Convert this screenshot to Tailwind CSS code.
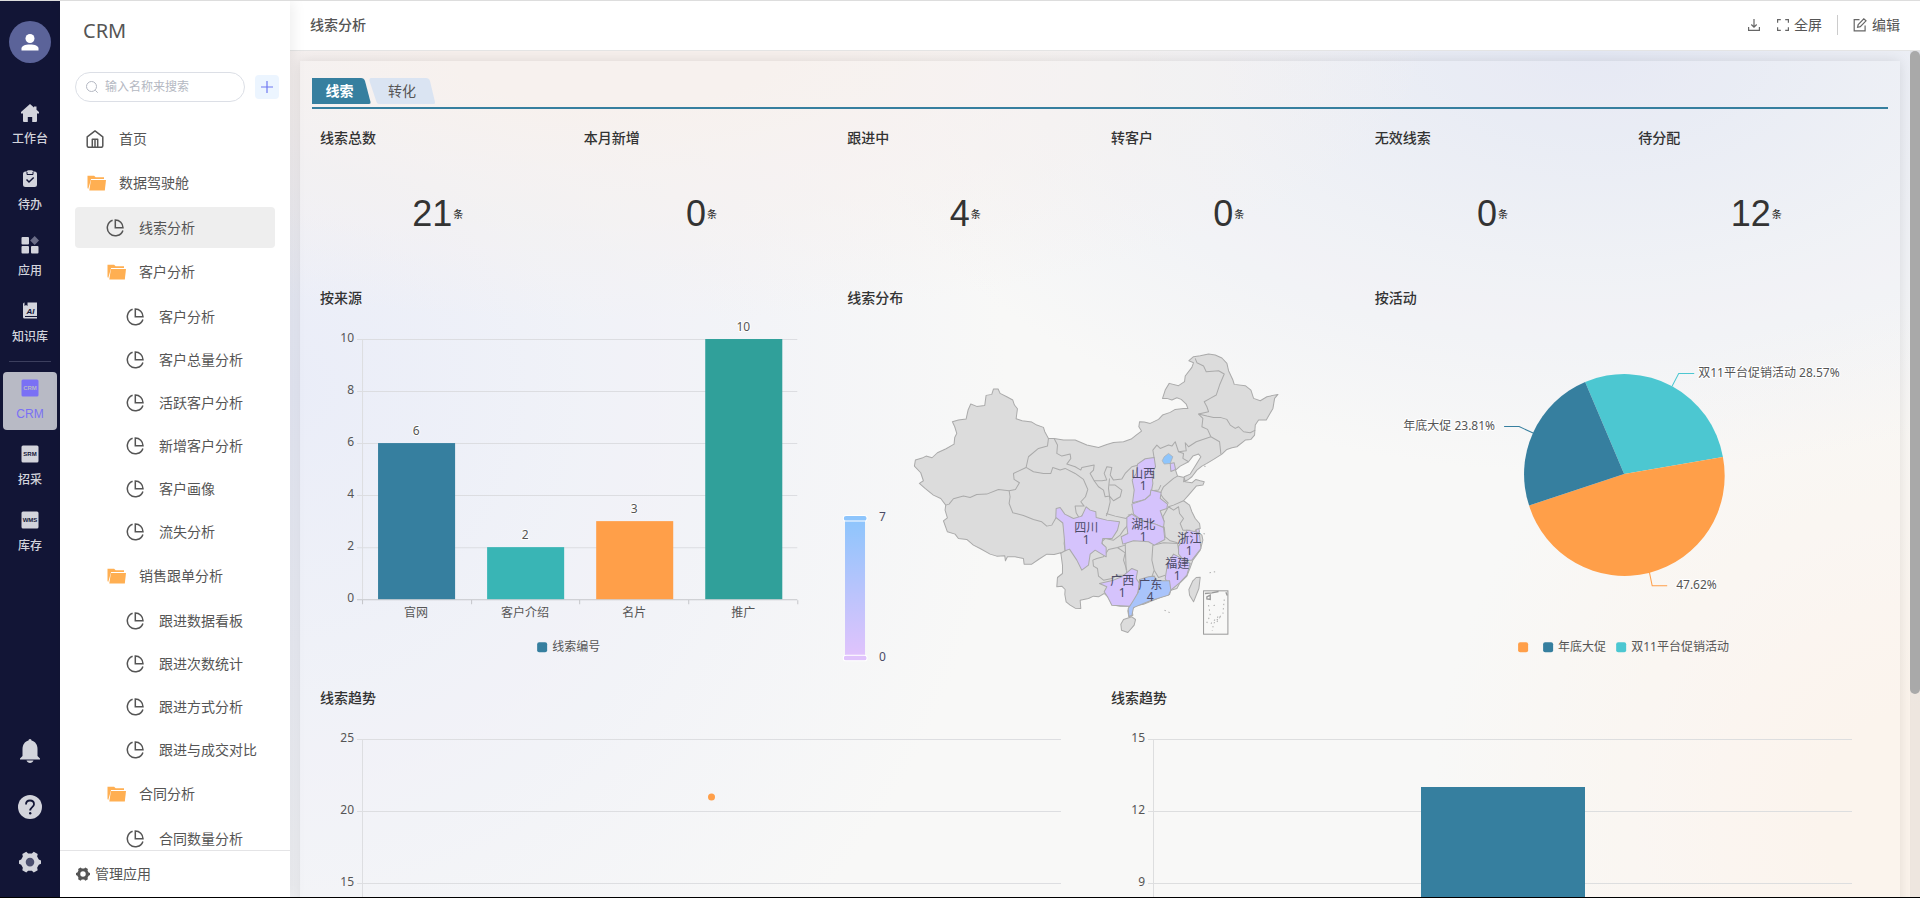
<!DOCTYPE html>
<html lang="zh-CN">
<head>
    <meta charset="UTF-8">
    <meta name="viewport" content="width=device-width, initial-scale=1.0">
    <title>CRM - 线索分析</title>
    <script src="https://cdn.jsdelivr.net/npm/@tailwindcss/browser@4"></script>
</head>
<body class="font-['Noto_Sans','Noto_Sans_CJK_SC',sans-serif] text-sm text-[#555]">
    <!-- icon set -->
    <svg class="hidden">
        <symbol id="i-pie" viewBox="0 0 18 18" fill="none" stroke="#555" stroke-width="1.5">
            <path d="M6.6 1.3A8 8 0 1 0 16.9 11.4"/>
            <path d="M9.3 1v7.7H17A7.7 7.7 0 0 0 9.3 1z"/>
        </symbol>
        <symbol id="i-folder" viewBox="0 0 20 18">
            <path fill="#ffaf52" d="M1.5 1.7h6.6l1.6 1.6h8.3v1.8H5.1L3 12.5 2.2 15 1.5 14z"/>
            <path fill="#ffaf52" d="M4.9 6h15.1l-1.2 10.6H3.3z"/>
        </symbol>
        <symbol id="i-house" viewBox="0 0 18 18" fill="none" stroke="#555" stroke-width="1.5" stroke-linejoin="round">
            <path d="M1.2 6.8 9 .9l7.8 5.9v9a1.5 1.5 0 0 1-1.5 1.5H2.7a1.5 1.5 0 0 1-1.5-1.5z"/>
            <path d="M6.3 17V9.3h5.4V17M9 9.5V17"/>
        </symbol>
        <symbol id="i-gear" viewBox="0 0 20 20">
            <path fill="currentColor" fill-rule="evenodd" d="M6.6.6 8.3 2.2h3.4L13.4.6 17 2.7l-.5 2.3L18 7.7l2 .9v3l-2 1-1.5 2.6.5 2.3-3.6 2-1.7-1.5H8.3l-1.7 1.5-3.6-2 .5-2.3L2 12.600l-2-1v-3l2-.9L3.5 5 3 2.700zM10 6.200a3.900 3.900 0 1 0 0 7.800 3.900 3.900 0 0 0 0-7.800z"/>
        </symbol>
    </svg>

    <div class="flex h-screen overflow-hidden border-t border-b border-t-[#ddd] border-b-black">
        <!-- app rail -->
        <nav class="w-15 shrink-0 bg-[#121536] flex flex-col items-center text-xs font-medium text-[#d3d4dc]">
            <button class="mt-5 size-[42px] rounded-full bg-[#5b6399] flex items-center justify-center" aria-label="用户">
                <svg class="size-5" viewBox="0 0 20 20" fill="#fff"><circle cx="10" cy="6.5" r="4.5"/><path d="M1.5 18.500v-2c0-2.500 3.500-4 8.500-4s8.500 1.500 8.500 4v2z"/></svg>
            </button>
            <div class="mt-[33px] flex flex-col items-center gap-2">
                <a href="#" class="w-[54px] h-[58px] pt-2 flex flex-col items-center gap-[9px] leading-4">
                    <svg class="size-[18px]" viewBox="0 0 18 18" fill="currentColor"><path d="M9 0 0 8v1.5h2V17a1 1 0 0 0 1 1h3.800v-5h4.400v5H15a1 1 0 0 0 1-1V9.500h2V8L15.500 5.700V2.500H13v1z"/></svg>
                    工作台
                </a>
                <a href="#" class="w-[54px] h-[58px] pt-2 flex flex-col items-center gap-[9px] leading-4">
                    <svg class="size-[18px]" viewBox="0 0 18 18"><path fill="currentColor" d="M4.500 1.500h1.300A2 2 0 0 1 7.500.3h3a2 2 0 0 1 1.700 1.200h1.300a2.500 2.500 0 0 1 2.500 2.500v10.500a2.500 2.500 0 0 1-2.500 2.500h-9A2.500 2.500 0 0 1 2 14.500V4a2.500 2.500 0 0 1 2.500-2.500z"/><path fill="none" stroke="#121536" d="M6 2v2.500h6V2"/><path fill="none" stroke="#121536" stroke-width="1.5" d="m5.500 9.500 2.500 2.500L12.700 7.500"/></svg>
                    待办
                </a>
                <a href="#" class="w-[54px] h-[58px] pt-2 flex flex-col items-center gap-[9px] leading-4">
                    <svg class="size-[18px]" viewBox="0 0 18 18" fill="currentColor"><rect x=".5" y="1" width="7.5" height="7.5" rx="1"/><rect x=".5" y="10" width="7.5" height="7.5" rx="1"/><rect x="10" y="10" width="7.5" height="7.5" rx="1"/><path fill="#6b6d87" d="m13.700 0 4.300 4.500-4.300 4.500-4.500-4.500z"/></svg>
                    应用
                </a>
                <a href="#" class="w-[54px] h-[58px] pt-2 flex flex-col items-center gap-[9px] leading-4">
                    <svg class="size-[18px]" viewBox="0 0 18 18"><path fill="currentColor" d="M2 2a1.500 1.500 0 0 1 1.500-1.500H16V14H4v1h12v1.500H3.500A1.500 1.500 0 0 1 2 15z"/><path fill="#121536" d="M3.500 0h3v4L5 3 3.500 4z"/><text x="5.500" y="12" font-size="8" font-weight="700" font-style="italic" font-family="Liberation Sans" fill="#121536">AI</text></svg>
                    知识库
                </a>
            </div>
            <hr class="mt-[9px] mb-2.5 w-[42px] border-[#3c3f5e]">
            <div class="flex flex-col items-center gap-2">
                <a href="#" class="w-[54px] h-[58px] pt-[7px] rounded bg-[#b8bac5] text-[#7a70f5] flex flex-col items-center gap-[9px] leading-4 font-normal font-['Liberation_Sans']">
                    <svg class="size-[18px]" viewBox="0 0 18 18"><rect x=".5" y=".5" width="17" height="17" rx="1.5" fill="#7a70f5"/><text x="9" y="11" text-anchor="middle" font-size="6" font-weight="700" font-family="Liberation Sans" fill="#b8bac5">CRM</text></svg>
                    CRM
                </a>
                <a href="#" class="w-[54px] h-[58px] pt-[7px] flex flex-col items-center gap-[9px] leading-4">
                    <svg class="size-[18px]" viewBox="0 0 18 18"><rect x=".5" y=".5" width="17" height="17" rx="1.5" fill="currentColor"/><text x="9" y="11" text-anchor="middle" font-size="6" font-weight="700" font-family="Liberation Sans" fill="#121536">SRM</text></svg>
                    招采
                </a>
                <a href="#" class="w-[54px] h-[58px] pt-[7px] flex flex-col items-center gap-[9px] leading-4">
                    <svg class="size-[18px]" viewBox="0 0 18 18"><rect x=".5" y=".5" width="17" height="17" rx="1.5" fill="currentColor"/><text x="9" y="11" text-anchor="middle" font-size="6" font-weight="700" font-family="Liberation Sans" fill="#121536">WMS</text></svg>
                    库存
                </a>
            </div>
            <div class="mt-auto mb-6 flex flex-col items-center gap-8">
                <button aria-label="通知"><svg class="block size-6" viewBox="0 0 24 24" fill="currentColor"><path d="M12 0c1 0 1.500.8 1.500 1.500C17.500 2.500 19.500 6 19.500 10v7l2.500 2.500v1H2v-1L4.500 17v-7c0-4 2-7.500 6-8.500C10.500.8 11 0 12 0zM8.500 21.500h7c-.5 1.500-2 2.500-3.500 2.500s-3-1-3.500-2.500z"/></svg></button>
                <button aria-label="帮助"><svg class="block size-6" viewBox="0 0 24 24"><circle cx="12" cy="12" r="12" fill="currentColor"/><path fill="none" stroke="#121536" stroke-width="1.8" d="M8 9.500C8 7 9.700 5.500 12 5.500s4 1.500 4 3.700c0 2.800-3.800 3-3.800 6.300"/><circle cx="12.200" cy="18.300" r="1.200" fill="#121536"/></svg></button>
                <button aria-label="设置"><svg class="block size-[22px]"><circle cx="11" cy="11" r="6" fill="#4b4e6e"/><use href="#i-gear"/></svg></button>
            </div>
        </nav>

        <!-- menu of the current app -->
        <aside class="relative z-10 w-[230px] shrink-0 bg-white flex flex-col shadow-[2px_0_14px_rgba(0,0,0,0.08)]">
            <h1 class="mt-4 ml-[23px] text-xl leading-7">CRM</h1>
            <div class="mt-[27px] pl-[15px] flex items-center gap-2.5">
                <label class="w-[170px] h-[30px] pl-2.5 rounded-full border border-[#dcdfe6] flex items-center gap-[7px]">
                    <svg class="size-3 shrink-0" viewBox="0 0 12 12" fill="none" stroke="#b4b8c2"><circle cx="5.500" cy="5.500" r="5"/><path d="m9.300 9.300 2.400 2.400"/></svg>
                    <input type="text" aria-label="搜索" placeholder="输入名称来搜索" class="w-full text-xs outline-none placeholder:text-[#b4b8c2]">
                </label>
                <button class="size-6 rounded bg-[#ecf5ff] flex items-center justify-center" aria-label="新增">
                    <svg class="size-3" viewBox="0 0 12 12" stroke="#6e78f2" stroke-width="1.2"><path d="M6 0v12M0 6h12"/></svg>
                </button>
            </div>
            <div class="mt-[15px] flex-1 min-h-0 overflow-hidden px-[15px]">
                <a href="#" class="h-[43px] pl-[11px] flex items-center gap-[15px]"><svg class="size-[18px]"><use href="#i-house"/></svg>首页</a>
                <a href="#" class="h-[46px] pl-[11px] flex items-center gap-[13px]"><svg class="w-5 h-[18px]"><use href="#i-folder"/></svg>数据驾驶舱</a>
                <a href="#" class="h-[41px] my-px pl-[31px] rounded bg-[#eee] flex items-center gap-[15px]"><svg class="size-[18px]"><use href="#i-pie"/></svg>线索分析</a>
                <a href="#" class="h-[46px] pl-[31px] flex items-center gap-[13px]"><svg class="w-5 h-[18px]"><use href="#i-folder"/></svg>客户分析</a>
                <a href="#" class="h-[43px] pl-[51px] flex items-center gap-[15px]"><svg class="size-[18px]"><use href="#i-pie"/></svg>客户分析</a>
                <a href="#" class="h-[43px] pl-[51px] flex items-center gap-[15px]"><svg class="size-[18px]"><use href="#i-pie"/></svg>客户总量分析</a>
                <a href="#" class="h-[43px] pl-[51px] flex items-center gap-[15px]"><svg class="size-[18px]"><use href="#i-pie"/></svg>活跃客户分析</a>
                <a href="#" class="h-[43px] pl-[51px] flex items-center gap-[15px]"><svg class="size-[18px]"><use href="#i-pie"/></svg>新增客户分析</a>
                <a href="#" class="h-[43px] pl-[51px] flex items-center gap-[15px]"><svg class="size-[18px]"><use href="#i-pie"/></svg>客户画像</a>
                <a href="#" class="h-[43px] pl-[51px] flex items-center gap-[15px]"><svg class="size-[18px]"><use href="#i-pie"/></svg>流失分析</a>
                <a href="#" class="h-[46px] pl-[31px] flex items-center gap-[13px]"><svg class="w-5 h-[18px]"><use href="#i-folder"/></svg>销售跟单分析</a>
                <a href="#" class="h-[43px] pl-[51px] flex items-center gap-[15px]"><svg class="size-[18px]"><use href="#i-pie"/></svg>跟进数据看板</a>
                <a href="#" class="h-[43px] pl-[51px] flex items-center gap-[15px]"><svg class="size-[18px]"><use href="#i-pie"/></svg>跟进次数统计</a>
                <a href="#" class="h-[43px] pl-[51px] flex items-center gap-[15px]"><svg class="size-[18px]"><use href="#i-pie"/></svg>跟进方式分析</a>
                <a href="#" class="h-[43px] pl-[51px] flex items-center gap-[15px]"><svg class="size-[18px]"><use href="#i-pie"/></svg>跟进与成交对比</a>
                <a href="#" class="h-[46px] pl-[31px] flex items-center gap-[13px]"><svg class="w-5 h-[18px]"><use href="#i-folder"/></svg>合同分析</a>
                <a href="#" class="h-[43px] pl-[51px] flex items-center gap-[15px]"><svg class="size-[18px]"><use href="#i-pie"/></svg>合同数量分析</a>
            </div>
            <button class="h-[47px] pl-4 border-t border-[#e4e4e6] flex items-center gap-[5px]"><svg class="size-3.5"><use href="#i-gear"/></svg>管理应用</button>
        </aside>

        <main class="flex-1 min-w-0 flex flex-col">
            <header class="h-[50px] shrink-0 px-5 pb-0.5 bg-white border-b border-[#e4e4e4] flex items-center">
                <h2 class="font-medium">线索分析</h2>
                <div class="ml-auto flex items-center">
                    <button class="mr-[17px]" aria-label="下载"><svg class="block size-3" viewBox="0 0 12 12" fill="none" stroke="#666" stroke-width="1.2"><path d="M.6 8v3.400h10.800V8M6 0v8M3.300 5.500 6 8.200l2.700-2.700"/></svg></button>
                    <button class="flex items-center gap-[5px]"><svg class="size-3" viewBox="0 0 12 12" fill="none" stroke="#666" stroke-width="1.2"><path d="M3.800.6H.6v3.200M8.200.6h3.200v3.200M3.800 11.400H.6V8.200M8.200 11.400h3.200V8.200"/></svg>全屏</button>
                    <span class="mx-[15px] w-px h-5 bg-[#ccc]"></span>
                    <button class="flex items-center gap-[5px]"><svg class="size-3.5" viewBox="0 0 14 14" fill="none" stroke="#666" stroke-width="1.2"><path d="M6.500 1.600H1.200v11.200h10.900V7.500M5.200 6.600l5.600-5.800 2.200 2-5.700 5.900-2.700.6z"/></svg>编辑</button>
                </div>
            </header>

            <div class="relative flex-1 min-h-0 overflow-hidden p-2.5 pr-5 bg-[#f7f7f6] bg-[radial-gradient(ellipse_50%_32%_at_20%_0%,#f6efec_20%,transparent),radial-gradient(ellipse_46%_50%_at_80%_0%,#e3e7f3,transparent),radial-gradient(ellipse_44%_90%_at_0%_40%,#e8ebf7,transparent),radial-gradient(ellipse_30%_60%_at_100%_90%,#fbf3eb_20%,transparent)]">
                <section class="px-3 pt-4 pb-10 bg-white/10 shadow-[0_0_12px_rgba(0,0,0,0.1)]">
                    <div class="h-8 border-b-2 border-[#367f9f] flex items-start" role="tablist">
                        <button role="tab" aria-selected="true" class="relative w-[59px] h-7 pr-1 font-bold text-white">
                            <svg class="absolute inset-0 w-[59px] h-7" viewBox="0 0 59 28"><path fill="#367f9f" d="M0 1h49q3 0 4 3l5.500 21q.5 2-1.500 2H0z"/></svg>
                            <span class="relative">线索</span>
                        </button>
                        <button role="tab" aria-selected="false" class="relative -ml-0.5 w-[66px] h-7">
                            <svg class="absolute inset-0 w-[66px] h-7" viewBox="0 0 66 28"><path fill="#dae4f2" d="M2 1h55q3 0 4 3l5 21q.5 2-1.500 2H10q-2 0-2.500-2L.5 4Q0 1 2 1z"/></svg>
                            <span class="relative">转化</span>
                        </button>
                    </div>

                    <div class="mt-[11px] grid grid-cols-6 gap-x-1.5 text-[#333]">
                        <div class="h-40"><h3 class="h-9 px-2 leading-9 font-medium">线索总数</h3><p class="h-[116px] pr-1.5 flex items-center justify-center gap-px text-4xl font-['Liberation_Sans']">21<span class="text-[10px] font-medium font-['Noto_Sans_CJK_SC']">条</span></p></div>
                        <div class="h-40"><h3 class="h-9 px-2 leading-9 font-medium">本月新增</h3><p class="h-[116px] pr-1.5 flex items-center justify-center gap-px text-4xl font-['Liberation_Sans']">0<span class="text-[10px] font-medium font-['Noto_Sans_CJK_SC']">条</span></p></div>
                        <div class="h-40"><h3 class="h-9 px-2 leading-9 font-medium">跟进中</h3><p class="h-[116px] pr-1.5 flex items-center justify-center gap-px text-4xl font-['Liberation_Sans']">4<span class="text-[10px] font-medium font-['Noto_Sans_CJK_SC']">条</span></p></div>
                        <div class="h-40"><h3 class="h-9 px-2 leading-9 font-medium">转客户</h3><p class="h-[116px] pr-1.5 flex items-center justify-center gap-px text-4xl font-['Liberation_Sans']">0<span class="text-[10px] font-medium font-['Noto_Sans_CJK_SC']">条</span></p></div>
                        <div class="h-40"><h3 class="h-9 px-2 leading-9 font-medium">无效线索</h3><p class="h-[116px] pr-1.5 flex items-center justify-center gap-px text-4xl font-['Liberation_Sans']">0<span class="text-[10px] font-medium font-['Noto_Sans_CJK_SC']">条</span></p></div>
                        <div class="h-40"><h3 class="h-9 px-2 leading-9 font-medium">待分配</h3><p class="h-[116px] pr-1.5 flex items-center justify-center gap-px text-4xl font-['Liberation_Sans']">12<span class="text-[10px] font-medium font-['Noto_Sans_CJK_SC']">条</span></p></div>
                    </div>

                    <div class="grid grid-cols-3 gap-x-1.5">
                        <!-- leads by source -->
                        <div>
                            <h3 class="h-9 px-2 leading-9 font-medium text-[#333]">按来源</h3>
                            <svg class="block w-full" viewBox="0 0 521 364" font-size="12" fill="#555">
                                <path fill="none" stroke="#dcdde1" d="M45 23.500H485M45 75.500H485M45 127.500H485M45 179.500H485M45 231.500H485M50.500 23V283"/>
                                <path fill="none" stroke="#c5c6ca" d="M45 283.500H485M50.500 284v4M159.500 284v4M267.500 284v4M376.500 284v4M485.500 284v4"/>
                                <rect x="66" y="127" width="77" height="156" fill="#367f9f"/>
                                <rect x="175" y="231" width="77" height="52" fill="#39b5b5"/>
                                <rect x="284" y="205" width="77" height="78" fill="#ff9f49"/>
                                <rect x="393" y="23" width="77" height="260" fill="#30a09a"/>
                                <g text-anchor="end">
                                    <text x="42" y="26">10</text><text x="42" y="78">8</text><text x="42" y="130">6</text>
                                    <text x="42" y="182">4</text><text x="42" y="234">2</text><text x="42" y="286">0</text>
                                </g>
                                <g text-anchor="middle">
                                    <g stroke="#fff" stroke-width="2" paint-order="stroke">
                                        <text x="104" y="119">6</text><text x="213" y="223">2</text><text x="322" y="197">3</text><text x="431" y="15">10</text>
                                    </g>
                                    <text x="104" y="301">官网</text><text x="213" y="301">客户介绍</text><text x="322" y="301">名片</text><text x="431" y="301">推广</text>
                                </g>
                                <rect x="225" y="326" width="10" height="10" rx="2" fill="#367f9f"/>
                                <text x="240" y="335">线索编号</text>
                            </svg>
                        </div>

                        <!-- leads by province -->
                        <div>
                            <h3 class="h-9 px-2 leading-9 font-medium text-[#333]">线索分布</h3>
                            <svg class="block w-full" viewBox="0 0 521 364" font-size="12" fill="#4b4b66">
                                <defs>
                                    <linearGradient id="scale" x1="0" y1="0" x2="0" y2="1">
                                        <stop offset="0" stop-color="#8ec5fc"/><stop offset="1" stop-color="#e0c3fc"/>
                                    </linearGradient>
                                </defs>
                                <svg x="-9" y="14" width="480" height="340" viewBox="0 0 1440 1020" overflow="visible">
                                    <rect x="45" y="570" width="60" height="405" fill="url(#scale)"/>
                                    <rect x="40" y="556" width="71" height="17" rx="8" fill="#8ec5fc" stroke="#fff" stroke-width="3"/>
                                    <rect x="40" y="975" width="71" height="17" rx="8" fill="#e0c3fc" stroke="#fff" stroke-width="3"/>
                                    <g fill="#dcdcdc" stroke="#aaa" stroke-width="3" stroke-linejoin="round">
                                        <!-- mainland -->
                                        <path d="M253 408 256 390 276 384 288 378 306 383 322 368 348 356 372 342 374 322 380 310 374 290 367 275 385 270 408 267 414 240 422 222 440 229 464 226 468 196 485 193 490 177 504 177 510 190 530 200 548 210 553 225 562 236 558 266 576 272 605 276 620 285 640 292 644 305 655 325 672 325 700 330 735 330 770 345 805 352 830 343 850 337 880 335 903 327 918 315 934 303 926 290 928 275 942 276 960 280 985 268 997 255 1020 247 1035 238 1060 235 1073 235 1068 222 1053 208 1040 203 1025 210 1010 205 997 205 1005 180 1017 160 1045 167 1063 155 1065 138 1085 112 1090 98 1076 92 1090 80 1110 77 1135 72 1155 75 1175 84 1190 100 1195 122 1208 150 1212 163 1245 167 1262 180 1270 205 1290 212 1310 200 1343 193 1333 205 1328 235 1308 270 1285 270 1275 285 1273 315 1262 328 1245 330 1220 350 1205 353 1190 358 1175 372 1150 388 1130 400 1115 408 1100 420 1085 440 1075 448 1060 455 1062 440 1080 432 1095 408 1112 380 1105 372 1088 378 1075 395 1050 408 1036 420 1042 438 1062 442 1065 455 1085 458 1097 448 1110 452 1122 455 1118 465 1098 468 1075 495 1060 512 1078 525 1085 545 1095 565 1108 580 1110 595 1095 600 1115 615 1118 630 1110 660 1088 690 1080 712 1070 738 1048 760 1040 775 1022 780 1018 793 995 800 975 808 940 822 918 826 905 838 908 855 896 860 893 842 898 828 870 828 845 824 838 805 822 790 805 800 790 798 775 805 750 810 752 835 735 834 720 825 708 815 704 793 705 778 695 768 680 770 682 742 697 730 697 705 692 668 672 673 650 672 625 688 605 702 582 702 580 685 555 680 532 680 526 692 524 677 500 678 480 672 450 655 430 645 410 628 385 625 375 612 352 605 340 572 352 563 345 540 347 525 332 505 310 495 285 475 268 460 280 452 272 428Z"/>
                                        <path d="M1098 742 1110 741 1106 775 1090 815 1078 795 1076 778 1088 752Z"/>
                                        <path d="M880 868 905 860 916 868 912 885 893 907 874 900 872 882Z"/>
                                    </g>
                                    <!-- province borders -->
                                    <g fill="none" stroke="#aaa" stroke-width="3" stroke-linejoin="round">
                                        <path d="M655 325 652 348 625 355 595 380 588 412 550 430 552 448 568 458 556 478 537 482 505 478 470 492 440 493 420 502 400 498 370 506 357 522 347 525"/>
                                        <path d="M537 482 540 500 537 520 548 548 580 556 610 568 635 575 650 588 665 585 678 562"/>
                                        <path d="M588 412 610 425 640 430 662 430 668 412 690 420 705 415 735 430 760 448 773 478 766 500 752 515 762 528 735 528 738 548 748 565 762 548"/>
                                        <path d="M672 325 682 345 680 370 695 378 720 372 722 385 710 402 735 410 752 420 755 412 792 405 790 420 780 430 792 452 815 452 830 450"/>
                                        <path d="M830 450 822 430 830 410 845 412 840 435 850 450 875 447 885 430 905 410 925 405"/>
                                        <path d="M792 452 805 470 820 480 825 500 838 498 835 475 838 445M838 498 850 512 870 500 875 480 855 465 838 465M838 498 840 515 833 545 828 558"/>
                                        <path d="M828 550 855 558 888 565 905 552 893 555"/>
                                        <path d="M678 562 698 578 706 600 702 640 705 662 690 670"/>
                                        <path d="M820 680 800 685 788 690 790 708 802 715 805 738 820 750 845 745 862 735 888 735 890 720M820 680 835 658 862 652 885 668 880 690 890 720M820 650 815 635 825 625 850 630 870 615 880 600 893 585M862 652 885 645"/>
                                        <path d="M885 640 888 720M968 645 965 690 972 720 965 740M968 645 1000 638 1042 640 1046 665M885 640 905 630M972 720 985 742 1005 735"/>
                                        <path d="M1015 530 1030 540 1045 530 1048 550 1060 565 1050 580 1058 600 1080 600M1002 590 1005 620 1020 632 1042 638M1015 530 998 560 1002 575"/>
                                        <path d="M1015 530 1030 525 1060 512M1015 520 1000 505 990 490 1000 470 1030 445 1042 438M965 482 985 480 992 465"/>
                                        <path d="M972 385 968 360 980 345 990 355 1015 345 1025 348 1035 335 1045 365 1060 370 1058 385 1075 395M1045 365 1068 362 1065 338 1075 350 1098 335 1142 320"/>
                                        <path d="M1142 320 1168 335 1172 372M1142 320 1132 298 1115 290 1118 265 1105 252 1130 258 1150 262 1170 262 1190 268 1200 285 1215 295 1225 290 1240 305 1260 308 1275 300"/>
                                        <path d="M1105 252 1135 245 1130 230 1122 215 1140 205 1158 195 1168 165 1182 132 1165 122 1128 125 1120 108 1100 98 1095 85"/>
                                    </g>
                                    <!-- provinces with leads -->
                                    <g fill="#d5c3fc" stroke="#aaa" stroke-width="3" stroke-linejoin="round">
                                        <path d="M972 382 976 410 965 430 968 460 962 492 945 508 907 518 912 480 906 450 918 430 922 402 945 386Z"/>
                                        <path d="M962 480 993 487 990 505 1012 522 1010 535 990 542 1002 575 1000 592 970 580 935 570 910 552 905 522 945 508 960 495Z"/>
                                        <path d="M890 562 905 552 935 572 975 582 1000 592 1004 628 972 645 955 635 910 632 878 642 873 620 893 610 890 590Z"/>
                                        <path d="M678 535 690 532 704 552 730 565 755 558 768 530 780 540 797 545 798 562 830 570 868 575 862 600 846 625 818 625 815 640 828 652 828 680 795 660 780 672 775 705 755 720 740 690 718 657 705 662 702 620 698 578 677 562Z"/>
                                        <path d="M1070 600 1098 605 1108 615 1112 655 1085 690 1060 690 1045 672 1045 648 1062 625Z"/>
                                        <path d="M1030 672 1060 688 1080 700 1070 735 1048 758 1022 780 1005 745 1012 700Z"/>
                                        <path d="M808 760 850 750 875 740 905 715 922 722 918 745 928 760 920 800 900 828 845 825 832 800 822 785 830 770Z"/>
                                        <path d="M1020 400 1032 398 1036 418 1022 424Z"/>
                                        <path d="M1098 598 1106 596 1108 606 1098 606Z"/>
                                    </g>
                                    <path fill="#a9c4fb" stroke="#aaa" stroke-width="3" d="M928 748 955 740 972 738 980 752 1018 752 1022 780 1015 795 960 812 910 832 905 856 896 858 894 835 910 810 925 785Z"/>
                                    <path fill="#8ec5fc" stroke="#aaa" stroke-width="2" d="M1002 380 1015 370 1028 380 1020 400 1002 402 996 392Z"/>
                                    <!-- south sea islands inset -->
                                    <rect x="1120" y="782" width="73" height="130" fill="none" stroke="#999" stroke-width="3"/>
                                    <path fill="none" stroke="#999" stroke-width="4" d="M1124 790 1145 788 1165 784M1130 800 1140 795 1140 808 1130 806ZM1187 786 1191 796"/>
                                    <path fill="none" stroke="#aaa" stroke-width="3" stroke-dasharray="4 9" d="M1182 808 1178 850 1150 880 1146 902M1135 825 1140 855 1128 882M1150 826 1160 824M1142 880 1165 858M1160 875 1172 858M1120 610 1125 612M1138 728 1160 724M1003 840 1020 848M1122 408 1134 412"/>
                                </svg>
                                <text x="40" y="205">7</text><text x="40" y="345">0</text>
                                <g text-anchor="middle">
                                    <text x="304" y="162">山西</text><text x="304" y="174">1</text>
                                    <text x="247" y="216">四川</text><text x="247" y="228">1</text>
                                    <text x="304" y="213">湖北</text><text x="304" y="225">1</text>
                                    <text x="350" y="227">浙江</text><text x="350" y="239">1</text>
                                    <text x="338" y="252">福建</text><text x="338" y="264">1</text>
                                    <text x="283" y="269">广西</text><text x="283" y="281">1</text>
                                    <text x="311" y="273">广东</text><text x="311" y="285">4</text>
                                </g>
                            </svg>
                        </div>

                        <!-- leads by campaign -->
                        <div>
                            <h3 class="h-9 px-2 leading-9 font-medium text-[#333]">按活动</h3>
                            <svg class="block w-full" viewBox="0 0 521 364" font-size="12" fill="#555">
                                <path fill="#4cc7d1" d="M257 158 218 66A100 100 0 0 1 355.700 141Z"/>
                                <path fill="#ff9f49" d="M257 158 355.700 141A100 100 0 0 1 162 189.500Z"/>
                                <path fill="#367f9f" d="M257 158 162 189.500A100 100 0 0 1 218 66Z"/>
                                <path fill="none" stroke="#4cc7d1" d="M305 70 311.500 57.500H327"/>
                                <path fill="none" stroke="#367f9f" d="M166 117 152 110.500H137"/>
                                <path fill="none" stroke="#ff9f49" d="M282 255 285 269.500H300"/>
                                <g stroke="#fff" stroke-width="2" paint-order="stroke">
                                    <text x="331" y="61">双11平台促销活动 28.57%</text>
                                    <text x="128" y="114" text-anchor="end">年底大促 23.81%</text>
                                    <text x="309" y="273">47.62%</text>
                                </g>
                                <rect x="151" y="326" width="10" height="10" rx="2" fill="#ff9f49"/>
                                <rect x="176" y="326" width="10" height="10" rx="2" fill="#367f9f"/>
                                <text x="191" y="335">年底大促</text>
                                <rect x="249" y="326" width="10" height="10" rx="2" fill="#4cc7d1"/>
                                <text x="264" y="335">双11平台促销活动</text>
                            </svg>
                        </div>
                    </div>

                    <!-- trends -->
                    <div class="grid grid-cols-2 gap-x-1.5">
                        <div>
                            <h3 class="h-9 px-2 leading-9 font-medium text-[#333]">线索趋势</h3>
                            <svg class="block w-full" viewBox="0 0 785 440" font-size="12" fill="#555">
                                <path fill="none" stroke="#dddee1" d="M45 23.500H749M45 95.500H749M45 167.500H749M45 239.500H749M45 311.500H749M45 383.500H749M50.500 23V383"/>
                                <g text-anchor="end">
                                    <text x="42" y="26">25</text><text x="42" y="98">20</text><text x="42" y="170">15</text>
                                    <text x="42" y="242">10</text><text x="42" y="314">5</text><text x="42" y="386">0</text>
                                </g>
                                <circle cx="399.500" cy="81" r="3.500" fill="#ff9f49"/>
                            </svg>
                        </div>
                        <div>
                            <h3 class="h-9 px-2 leading-9 font-medium text-[#333]">线索趋势</h3>
                            <svg class="block w-full" viewBox="0 0 785 440" font-size="12" fill="#555">
                                <path fill="none" stroke="#dddedf" d="M45 23.500H749M45 95.500H749M45 167.500H749M45 239.500H749M45 311.500H749M45 383.500H749M50.500 23V383"/>
                                <rect x="318" y="71" width="164" height="312" fill="#367f9f"/>
                                <g text-anchor="end">
                                    <text x="42" y="26">15</text><text x="42" y="98">12</text><text x="42" y="170">9</text>
                                    <text x="42" y="242">6</text><text x="42" y="314">3</text><text x="42" y="386">0</text>
                                </g>
                            </svg>
                        </div>
                    </div>
                </section>
                <div class="absolute top-0 right-0 w-2.5 h-full bg-black/5"><div class="h-[76%] rounded-full bg-[#a9a9a9]"></div></div>
            </div>
        </main>
    </div>
</body>
</html>
